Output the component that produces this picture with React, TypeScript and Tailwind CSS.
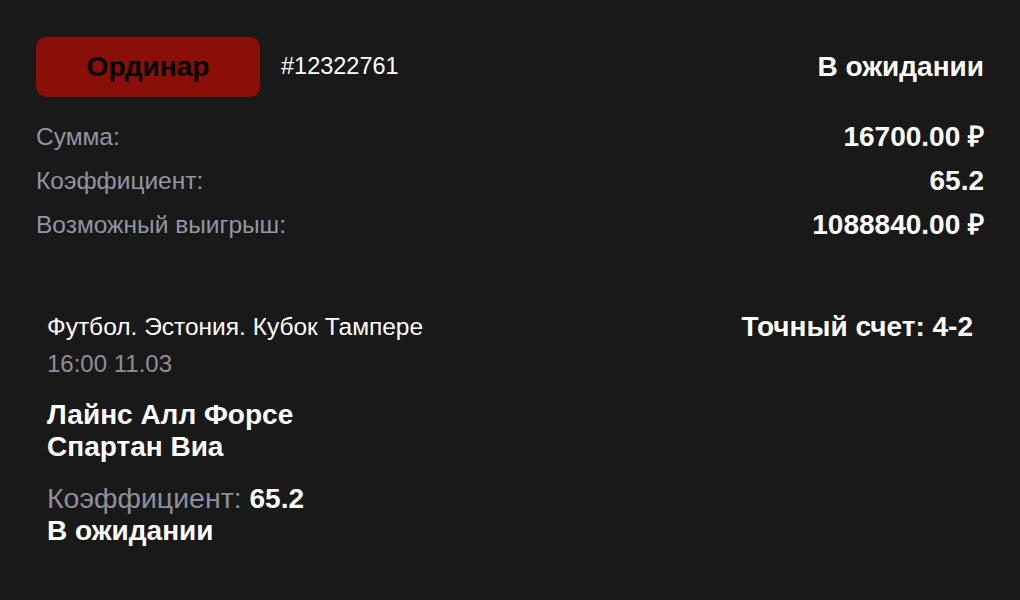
import React from "react";

const font = { fontFamily: '"Liberation Sans", Arial, sans-serif' };

function Row({ label, value }: { label: string; value: string }) {
  return (
    <div className="flex h-[44px] items-center justify-between">
      <span className="text-[24.5px] leading-[28px] text-[#9494a2]">{label}</span>
      <span className="text-[28px] font-bold leading-[32px] text-white">{value}</span>
    </div>
  );
}

export default function App() {
  return (
    <div style={font} className="w-[1020px] h-[600px] bg-[#19191a] px-[36px] pt-[37px] text-white">
      <div className="flex h-[60px] items-center">
        <div className="flex h-[60px] w-[224px] items-center justify-center rounded-[10px] bg-[#8a0f08] text-[28px] font-bold text-black">
          Ординар
        </div>
        <span className="ml-[21px] text-[23.5px] text-white">#12322761</span>
        <span className="ml-auto text-[28px] font-bold">В ожидании</span>
      </div>
      <div className="mt-[18px]">
        <Row label="Сумма:" value="16700.00 ₽" />
        <Row label="Коэффициент:" value="65.2" />
        <Row label="Возможный выигрыш:" value="1088840.00 ₽" />
      </div>
      <div className="mt-[66px] flex justify-between px-[11px]">
        <div className="flex flex-col">
          <span className="text-[24.5px] leading-[28px]">Футбол. Эстония. Кубок Тампере</span>
          <span className="mt-[9px] text-[24px] leading-[28px] text-[#8e8e99]">16:00 11.03</span>
          <span className="mt-[21px] text-[28px] font-bold leading-[32px]">Лайнс Алл Форсе</span>
          <span className="text-[28px] font-bold leading-[32px]">Спартан Виа</span>
          <span className="mt-[19px] text-[28px] leading-[32px]">
            <span className="text-[28.5px] text-[#8e8e99]">Коэффициент: </span>
            <span className="font-bold">65.2</span>
          </span>
          <span className="text-[28px] font-bold leading-[32px]">В ожидании</span>
        </div>
        <span className="text-[28px] font-bold leading-[28px]">Точный счет: 4-2</span>
      </div>
    </div>
  );
}
